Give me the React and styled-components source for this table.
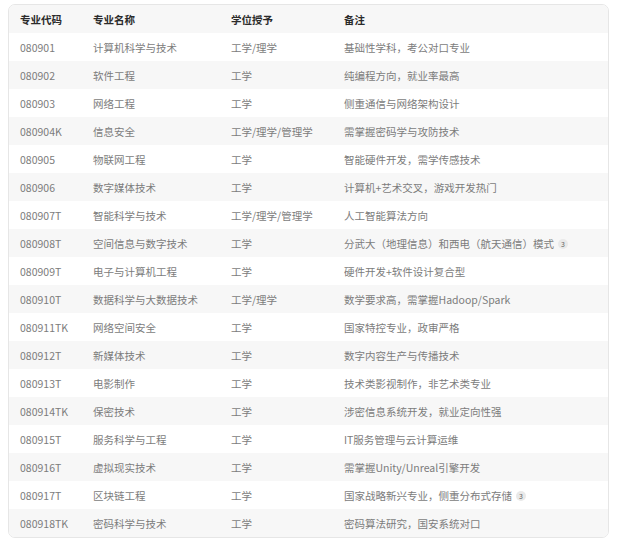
import React from 'react';
import styled, { createGlobalStyle } from 'styled-components';

const GlobalStyle = createGlobalStyle`
  html, body {
    margin: 0;
    padding: 0;
    background: #ffffff;
  }
  body {
    font-family: "Noto Sans CJK SC", "Noto Sans", sans-serif;
  }
`;

const majors = [
  ['080901', '计算机科学与技术', '工学/理学', '基础性学科，考公对口专业'],
  ['080902', '软件工程', '工学', '纯编程方向，就业率最高'],
  ['080903', '网络工程', '工学', '侧重通信与网络架构设计'],
  ['080904K', '信息安全', '工学/理学/管理学', '需掌握密码学与攻防技术'],
  ['080905', '物联网工程', '工学', '智能硬件开发，需学传感技术'],
  ['080906', '数字媒体技术', '工学', '计算机+艺术交叉，游戏开发热门'],
  ['080907T', '智能科学与技术', '工学/理学/管理学', '人工智能算法方向'],
  ['080908T', '空间信息与数字技术', '工学', '分武大（地理信息）和西电（航天通信）模式', 3],
  ['080909T', '电子与计算机工程', '工学', '硬件开发+软件设计复合型'],
  ['080910T', '数据科学与大数据技术', '工学/理学', '数学要求高，需掌握Hadoop/Spark'],
  ['080911TK', '网络空间安全', '工学', '国家特控专业，政审严格'],
  ['080912T', '新媒体技术', '工学', '数字内容生产与传播技术'],
  ['080913T', '电影制作', '工学', '技术类影视制作，非艺术类专业'],
  ['080914TK', '保密技术', '工学', '涉密信息系统开发，就业定向性强'],
  ['080915T', '服务科学与工程', '工学', 'IT服务管理与云计算运维'],
  ['080916T', '虚拟现实技术', '工学', '需掌握Unity/Unreal引擎开发'],
  ['080917T', '区块链工程', '工学', '国家战略新兴专业，侧重分布式存储', 3],
  ['080918TK', '密码科学与技术', '工学', '密码算法研究，国安系统对口'],
];

const App = () => {
  return (
    <>
      <GlobalStyle />
      <Page>
        <Card>
          <Table>
            <colgroup>
              <col style={{ width: 73 }} />
              <col style={{ width: 138 }} />
              <col style={{ width: 113 }} />
              <col />
            </colgroup>
            <thead>
              <HeadRow>
                <Th>专业代码</Th>
                <Th>专业名称</Th>
                <Th>学位授予</Th>
                <Th>备注</Th>
              </HeadRow>
            </thead>
            <tbody>
              {majors.map(([code, name, degree, note, cite], i) => (
                <Row key={code} $striped={i % 2 === 1}>
                  <Td>{code}</Td>
                  <Td>{name}</Td>
                  <Td>{degree}</Td>
                  <Td>
                    {note}
                    {cite && <Cite>{cite}</Cite>}
                  </Td>
                </Row>
              ))}
            </tbody>
          </Table>
        </Card>
      </Page>
    </>
  );
};

const Page = styled.div`
  padding: 4px 12px 12px 8px;
`;

const Card = styled.div`
  width: 601px;
  box-sizing: border-box;
  border: 1px solid #e6e6e6;
  border-radius: 7px;
  overflow: hidden;
  background: #fff;
`;

const Table = styled.table`
  width: 100%;
  border-collapse: collapse;
  table-layout: fixed;
  font-size: 10.5px;
`;

const HeadRow = styled.tr`
  background: #f7f7f7;
  height: 28px;
`;

const Th = styled.th`
  text-align: left;
  font-weight: 700;
  color: #2b2b2b;
  padding: 0 0 0 11px;
  white-space: nowrap;
`;

const Row = styled.tr`
  height: 28px;
  background: ${(p) => (p.$striped ? '#f7f7f7' : '#ffffff')};
`;

const Td = styled.td`
  color: #7c7c7c;
  padding: 0 0 0 11px;
  white-space: nowrap;
`;

const Cite = styled.span`
  display: inline-flex;
  align-items: center;
  justify-content: center;
  width: 10px;
  height: 10px;
  margin-left: 4px;
  border-radius: 50%;
  background: #e9e9e9;
  color: #666;
  font-size: 7px;
  vertical-align: 1px;
`;

export default App;
